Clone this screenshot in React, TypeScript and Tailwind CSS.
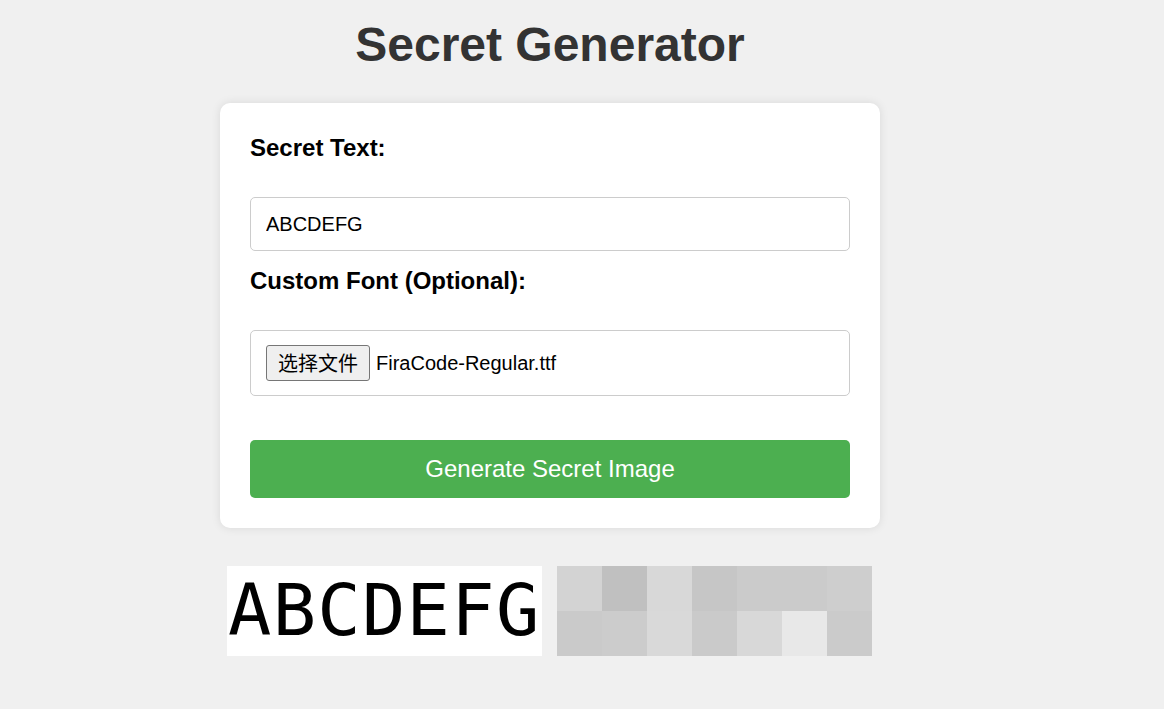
import React from "react";

const pixelRows: string[][] = [
  ["#d3d3d3", "#c0c0c0", "#d8d8d8", "#c6c6c6", "#cbcbcb", "#cbcbcb", "#cecece"],
  ["#cacaca", "#cccccc", "#d9d9d9", "#cacaca", "#d8d8d8", "#e8e8e8", "#cbcbcb"],
];

const App: React.FC = () => {
  return (
    <div className="min-h-screen bg-[#f0f0f0] font-['Liberation_Sans',Arial,sans-serif] text-black">
      <div className="w-[1100px]">
        <h1 className="pt-[17px] text-center text-[48px] leading-[55px] font-bold text-[#333]">
          Secret Generator
        </h1>

        <div className="mx-auto mt-[31px] w-[660px] rounded-[10px] bg-white p-[30px] shadow-[0_0_10px_rgba(0,0,0,0.1)]">
          <label className="block pt-[1px] pb-[36px] text-[24px] leading-[27px] font-bold">
            Secret Text:
          </label>
          <input
            type="text"
            defaultValue="ABCDEFG"
            className="block h-[54px] w-full rounded-[5px] border border-[#ccc] px-[15px] text-[20px] outline-none"
          />

          <label className="mt-[15px] block pt-[1px] pb-[36px] text-[24px] leading-[27px] font-bold">
            Custom Font (Optional):
          </label>
          <div className="flex h-[66px] items-center rounded-[5px] border border-[#ccc] px-[15px] text-[20px]">
            <span className="flex h-[36px] items-center rounded-[3px] border border-[#767676] bg-[#efefef] px-[11px] font-['Noto_Sans_CJK_SC',sans-serif] text-[20px]">
              选择文件
            </span>
            <span className="ml-[6px]">FiraCode-Regular.ttf</span>
          </div>

          <button className="mt-[44px] flex h-[58px] w-full items-center justify-center rounded-[5px] bg-[#4caf50] text-[24px] text-white">
            Generate Secret Image
          </button>
        </div>

        <div className="mt-[38px] flex justify-center gap-[15px] pr-[1px]">
          <div className="h-[90px] w-[315px] overflow-hidden bg-white">
            <div className="pl-[1px] font-['DejaVu_Sans_Mono',monospace] text-[72px] leading-[88px] tracking-[1.3px] whitespace-nowrap text-black">
              ABCDEFG
            </div>
          </div>
          <div className="grid h-[90px] w-[315px] grid-cols-7">
            {pixelRows.flat().map((c, i) => (
              <div key={i} className="h-[45px]" style={{ backgroundColor: c }} />
            ))}
          </div>
        </div>
      </div>
    </div>
  );
};

export default App;
